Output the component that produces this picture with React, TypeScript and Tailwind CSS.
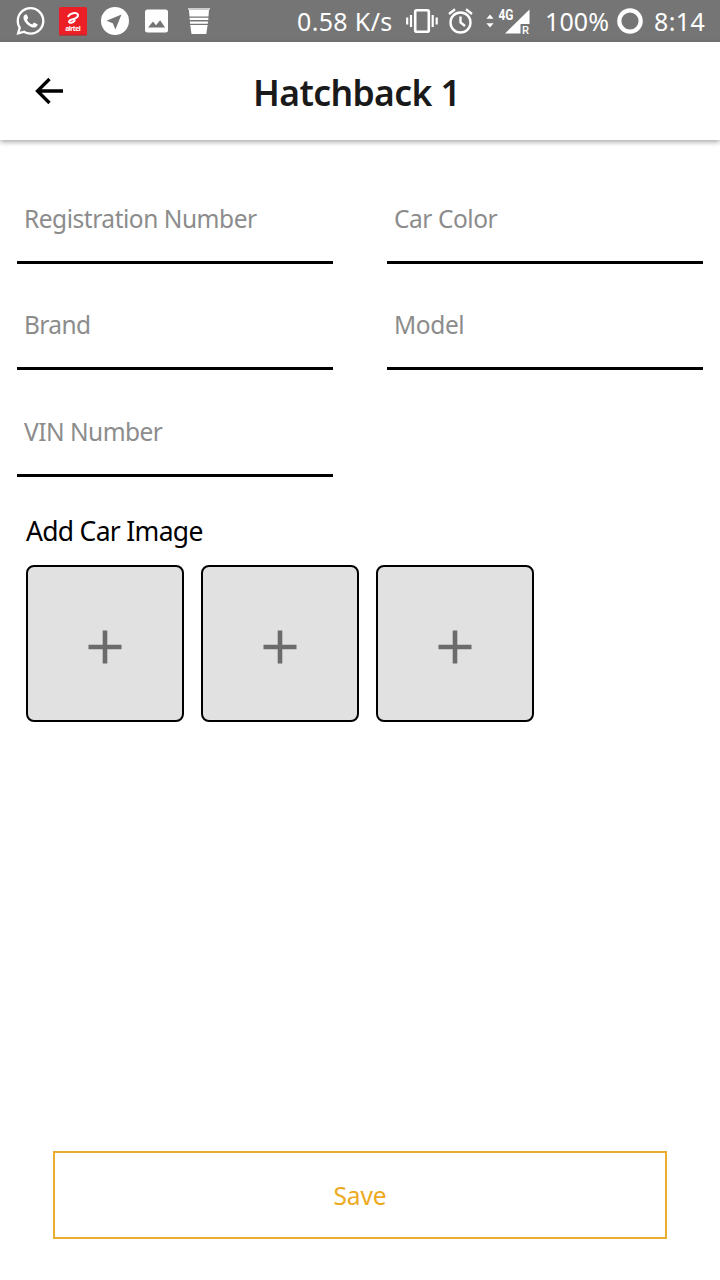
import React from "react";
import { FaWhatsapp } from "react-icons/fa";

const fields = [
  { label: "Registration Number", tracking: "tracking-[-0.47px]" },
  { label: "Car Color", tracking: "tracking-[-0.45px]" },
  { label: "Brand", tracking: "tracking-[-0.6px]" },
  { label: "Model", tracking: "tracking-[-0.4px]" },
  { label: "VIN Number", tracking: "tracking-[-0.52px]" },
];

function StatusBar() {
  return (
    <div className="flex h-[42px] items-center bg-[#757575] text-[25px] leading-[42px] whitespace-nowrap text-white">
      <FaWhatsapp className="ml-[15px] h-[32px] w-[31px] shrink-0" />
      <svg className="ml-[13px] h-[29px] w-[28px] shrink-0" viewBox="0 0 28 29">
        <rect width="28" height="28.5" rx="1.5" fill="#ec1f27" />
        <path d="M0.5 28h27" stroke="#a3333a" strokeWidth="1" />
        <path
          d="M9.300 9.200C11 6.400 17 4.800 18.700 7.200c1.300 2.400-2 4.600-5.700 5.300-3 .600-3.800 2.700-2 3.200 1.700.400 3.800-.7 4.600-2.200"
          fill="none"
          stroke="#fff"
          strokeWidth="2"
          strokeLinecap="round"
        />
        <text x="14" y="23.500" textAnchor="middle" textLength="15.500" fontSize="6.800" fontWeight="700" fontFamily="Noto Sans, sans-serif" fill="#fff">
          airtel
        </text>
      </svg>
      <svg className="ml-[14px] h-[28px] w-[28px] shrink-0" viewBox="0 0 28 28">
        <circle cx="14" cy="14" r="14" fill="#fff" />
        <path d="M20.500 7.500 5.500 13.800l6.300 2.400 2.600 6.300z" fill="#757575" />
      </svg>
      <svg className="ml-[15px] h-[24px] w-[25px] shrink-0" viewBox="0 0 25 24">
        <rect x="1" y="0.500" width="23" height="23" rx="2.500" fill="#fff" />
        <path d="M4 18.500 9 12.500l3 3.800 4.100-5.100 5 7.300z" fill="#757575" />
      </svg>
      <svg className="ml-[19px] h-[28px] w-[22px] shrink-0" viewBox="0 0 22 28">
        <path d="M0 1h22v2H0z" fill="#ccc" />
        <path d="M1 3h20l-.5 6.500h-19zM1.600 10.700h18.800l-.1 2.300H1.700zM1.900 14.400H20l-.2 2.300H2zM2.200 18h17.400L18.300 27H3.500z" fill="#fff" />
      </svg>

      <span className="ml-[87px] w-[109px] text-[25px] tracking-[0.35px]">0.58 K/s</span>
      <svg className="h-[26px] w-[32px] shrink-0" viewBox="0 0 32 26">
        <path d="M1.200 9.500v7M5 7v12M26.700 7v12M30.700 9.500v7" stroke="#fff" strokeWidth="2.200" />
        <rect x="9.200" y="2.200" width="13.600" height="21.600" rx="1.500" fill="none" stroke="#fff" strokeWidth="2.600" />
      </svg>
      <svg className="ml-[10px] h-[26px] w-[25px] shrink-0" viewBox="0 0 25 26" fill="none" stroke="#fff" strokeWidth="2.400">
        <circle cx="12.500" cy="14.500" r="10" />
        <path d="M12.500 8.500v6l4.500 3.500M1 6l6-4.700M18 1.300 24 6" />
      </svg>
      <svg className="ml-[13px] h-[30px] w-[45px] shrink-0" viewBox="0 0 45 30" fill="#fff">
        <path d="m4 8.500 3.600 4.300H.4zM4 21.500l3.600-4.300H.4z" />
        <path d="M43.500 3.500v14.500h-9v9.500H19z" />
        <text x="12.500" y="13.500" textLength="15" lengthAdjust="spacingAndGlyphs" fontSize="14" fontWeight="700" fontFamily="Roboto, sans-serif">
          4G
        </text>
        <text x="36" y="27.500" textLength="7" lengthAdjust="spacingAndGlyphs" fontSize="11.500" fontWeight="500" fontFamily="Roboto, sans-serif">
          R
        </text>
      </svg>
      <span className="ml-[14px] w-[72px] text-[25px] tracking-[0.1px]">100%</span>
      <svg className="h-[26px] w-[26px] shrink-0" viewBox="0 0 26 26">
        <circle cx="13" cy="13" r="10.700" fill="none" stroke="#fff" strokeWidth="4.200" />
      </svg>
      <span className="ml-[11px] text-[25px] tracking-[0.4px]">8:14</span>
    </div>
  );
}

function AddTile() {
  return (
    <button type="button" className="flex h-[157px] w-[158px] items-center justify-center rounded-[8px] border-2 border-black bg-[#e1e1e1]">
      <svg className="mt-[6px] h-[34px] w-[34px]" viewBox="0 0 34 34">
        <path d="M17 .500v33M.500 17h33" stroke="#6b6b6b" strokeWidth="4.600" />
      </svg>
    </button>
  );
}

export default function App() {
  return (
    <div className="flex h-[1280px] w-[720px] flex-col overflow-hidden bg-white font-['Noto_Sans',sans-serif]">
      <StatusBar />
      <header className="flex h-[98px] shrink-0 items-center bg-white shadow-[0_2px_5px_rgba(0,0,0,0.35)]">
        <svg className="ml-[34px] h-[28px] w-[30px]" viewBox="0 0 30 28" fill="none" stroke="#000" strokeWidth="3.300">
          <path d="M29 14H3.500M15.500 2 3.500 14l12 12" />
        </svg>
        <h1 className="mt-[1px] ml-[189px] text-[35.500px] leading-[50px] font-semibold tracking-[-0.6px] whitespace-nowrap text-[#1a1a1a]">Hatchback 1</h1>
      </header>

      <main className="flex grow flex-col">
        <div className="mt-[18px] ml-[17px] grid w-[686px] grid-cols-[316px_316px] justify-between">
          {fields.map(({ label, tracking }) => (
            <label key={label} className="flex h-[106px] flex-col justify-end border-b-[3px] border-black pb-[25px] pl-[7px] last:h-[107px]">
              <span className={`text-[24.500px] leading-[34px] whitespace-nowrap text-[#8c8c8c] ${tracking}`}>{label}</span>
            </label>
          ))}
        </div>
        <h2 className="mt-[36px] ml-[26px] text-[26.500px] leading-[36px] tracking-[-0.7px] whitespace-nowrap text-black">Add Car Image</h2>
        <div className="mt-[16px] ml-[26px] flex gap-[17px]">
          <AddTile />
          <AddTile />
          <AddTile />
        </div>
        <button type="button" className="mx-auto mt-auto mb-[41px] h-[88px] w-[614px] border-2 border-[#e9ae31] pt-[2px] text-[24.500px] tracking-[-0.1px] text-[#edaa20]">
          Save
        </button>
      </main>
    </div>
  );
}
